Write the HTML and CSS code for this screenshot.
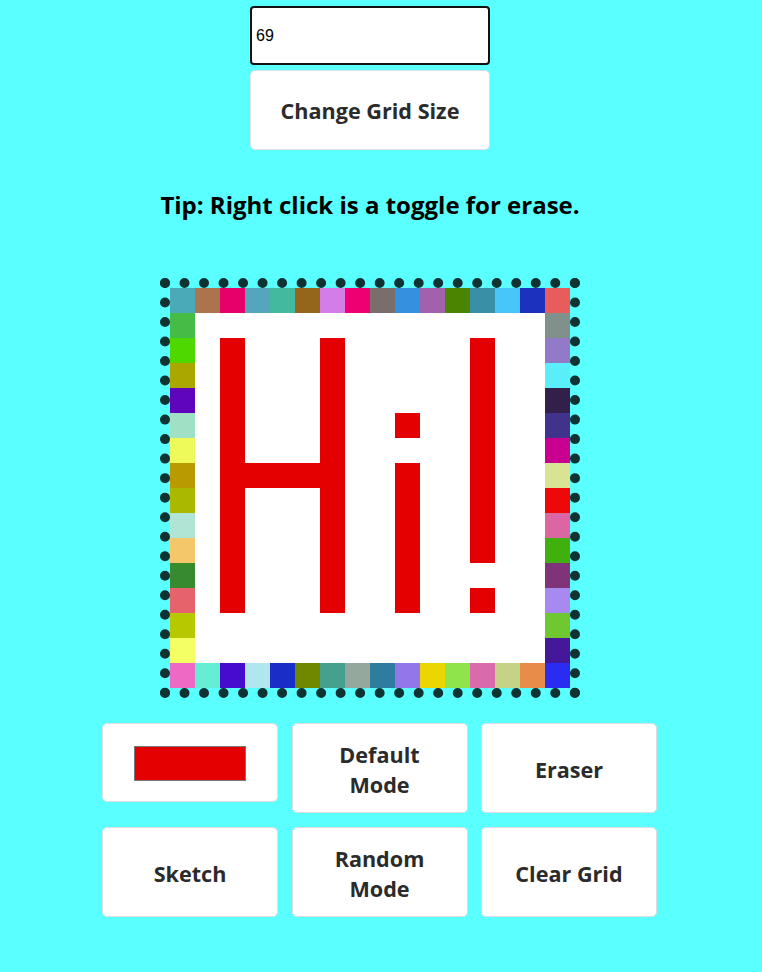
FILE: index.html
```html
<!DOCTYPE html>
<html>
<head>
<meta charset="utf-8">
<link rel="stylesheet" href="styles.css">
</head>
<body>
<div class="top">
  <input class="size-input" type="text" value="69">
  <button class="btn btn-size">Change Grid Size</button>
  <h2 class="tip">Tip: Right click is a toggle for erase.</h2>
  <div class="board" id="board"></div>
</div>
<div class="controls">
  <div class="btn btn-color"><span class="swatch"></span></div>
  <button class="btn btn-ctl">Default Mode</button>
  <button class="btn btn-ctl">Eraser</button>
  <button class="btn btn-ctl">Sketch</button>
  <button class="btn btn-ctl">Random Mode</button>
  <button class="btn btn-ctl">Clear Grid</button>
</div>
<script src="script.js"></script>
</body>
</html>
```
FILE: styles.css
```css
* { box-sizing: border-box; }
body {
  margin: 0;
  background: #5affff;
  font-family: "Open Sans", "Noto Sans", sans-serif;
}
.top {
  width: 740px;
  display: flex;
  flex-direction: column;
  align-items: center;
}
.size-input {
  margin-top: 6px;
  width: 240px;
  height: 59px;
  border: 2px solid #111;
  border-radius: 4px;
  padding: 0 0 0 4px;
  font: 16px "Liberation Sans", Arial, sans-serif;
  color: #000;
  background: #fff;
  outline: none;
}
.btn {
  background: #fff;
  border: 1px solid #dedede;
  border-radius: 5px;
  color: #2b2b2b;
  font-family: "Open Sans", "Noto Sans", sans-serif;
  font-weight: 700;
  font-size: 21.6px;
  line-height: 30px;
  display: flex;
  align-items: center;
  justify-content: center;
  text-align: center;
}
.btn-size {
  margin-top: 5px;
  width: 240px;
  height: 80px;
  padding-top: 2px;
}
.tip {
  margin: 39px 0 0;
  height: 32px;
  line-height: 32px;
  font-size: 24px;
  font-weight: 700;
  color: #000;
}
.board {
  margin-top: 57px;
  border: 10px dotted #0f3333;
  display: grid;
  grid-template-columns: repeat(16, 25px);
  grid-auto-rows: 25px;
}
.cell { background: #fff; }
.cell.on { background: #e40000; }
.controls {
  margin: 25px 0 0 102px;
  display: grid;
  grid-template-columns: repeat(3, 176px);
  column-gap: 13.5px;
  row-gap: 14px;
  width: 555px;
}
.btn-ctl {
  height: 90px;
  padding: 4px 26px 0;
}
.btn-color {
  height: 79px;
}
.swatch {
  width: 112px;
  height: 35px;
  margin-top: 2px;
  background: #e40000;
  border: 1px solid #777;
}
```
FILE: script.js
```js
var topRow = ["#4aaab8","#ad734e","#e8006a","#55a5bd","#43b99f","#93661c","#d27de8","#ee0072","#7a6e6b","#3690e0","#a260ad","#4a8400","#3990a6","#48c6fa","#1c31be","#e85c5c"];
var bottomRow = ["#ec6ac4","#66eed4","#450cd0","#b0e6ee","#182ec6","#6f8800","#46a08e","#94a89e","#2e7c9e","#9277e9","#ecd600","#8ee44a","#d96aab","#c6d386","#e88c4a","#2b2cf1"];
var leftCol = ["#45bc45","#4fd800","#aaa800","#5f05bb","#a0e0c4","#eefa5a","#b99a00","#aab800","#b0e4d4","#f4c76a","#388a2f","#e7636c","#b8c800","#f4ff66"];
var rightCol = ["#7f918a","#937ac8","#5aeefa","#33204a","#41338c","#c9008f","#d8e394","#ef0808","#db66a1","#3fb00e","#7f3378","#a889ef","#70c830","#45189a"];
function isRed(r, c) {
  if ((c === 2 || c === 6) && r >= 2 && r <= 12) return true;
  if (r === 7 && c >= 3 && c <= 5) return true;
  if (c === 9 && (r === 5 || (r >= 7 && r <= 12))) return true;
  if (c === 12 && ((r >= 2 && r <= 10) || r === 12)) return true;
  return false;
}
var board = document.getElementById("board");
for (var r = 0; r < 16; r++) {
  for (var c = 0; c < 16; c++) {
    var d = document.createElement("div");
    d.className = "cell";
    var col = null;
    if (r === 0) col = topRow[c];
    else if (r === 15) col = bottomRow[c];
    else if (c === 0) col = leftCol[r - 1];
    else if (c === 15) col = rightCol[r - 1];
    if (col) d.style.background = col;
    else if (isRed(r, c)) d.className += " on";
    board.appendChild(d);
  }
}
```
